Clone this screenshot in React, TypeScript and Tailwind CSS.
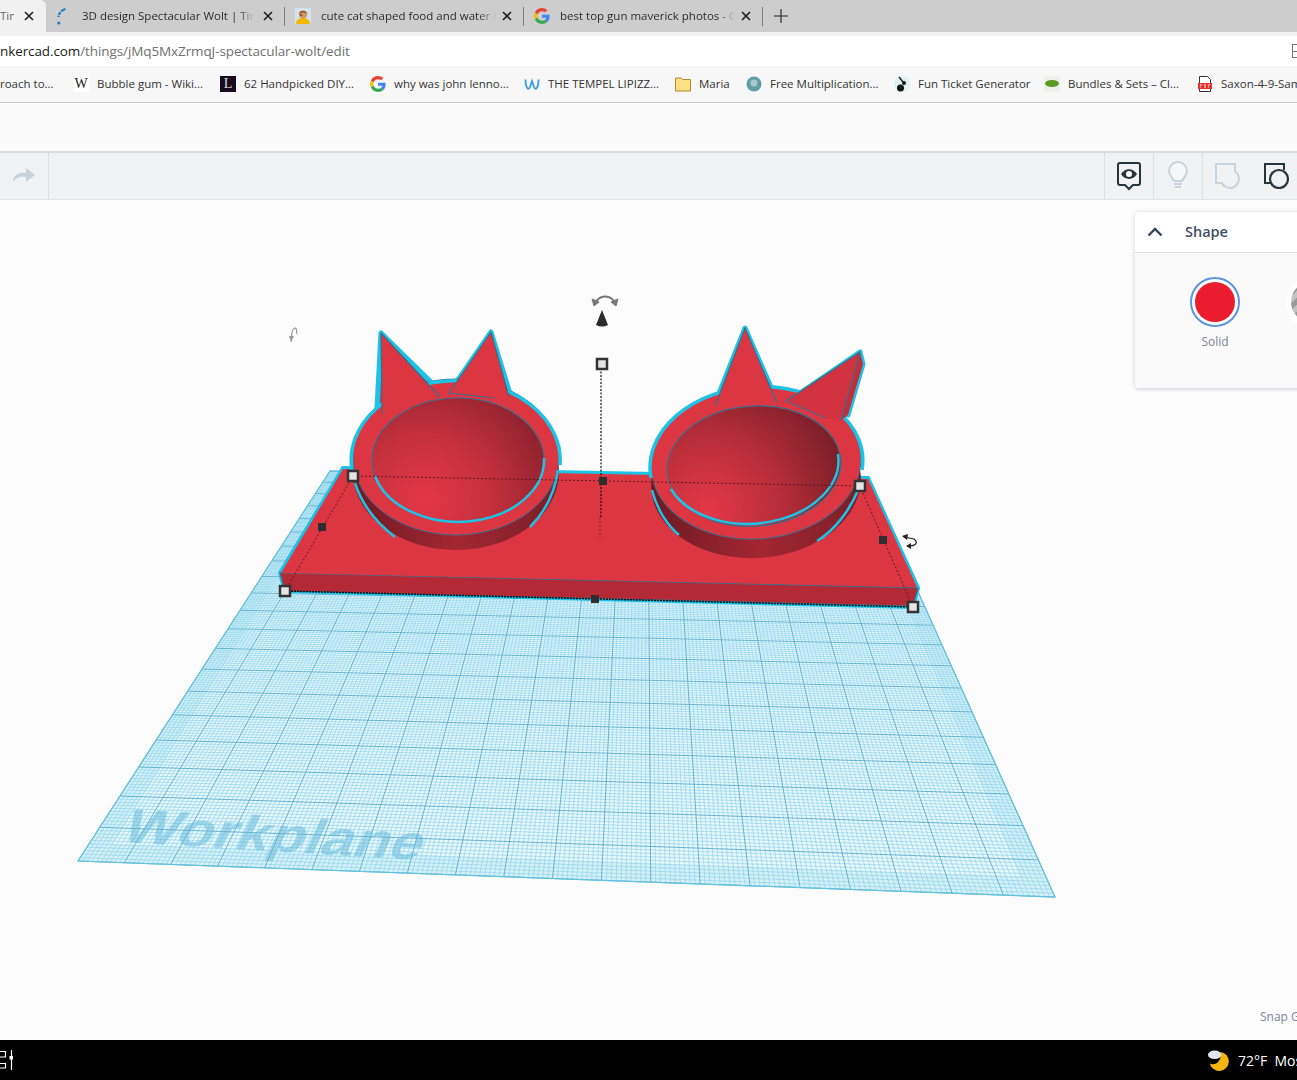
import React from 'react';

const CHROME_FONT = { fontFamily: '"Open Sans", "Noto Sans", sans-serif' };

const GoogleG = () => (
    <svg viewBox="0 0 48 48" className="w-4 h-4 shrink-0">
        <path fill="#EA4335" d="M24 9.5c3.5 0 6.700 1.200 9.200 3.600l6.900-6.900C35.900 2.400 30.500 0 24 0 14.600 0 6.500 5.400 2.600 13.200l8 6.200C12.500 13.600 17.800 9.500 24 9.500z" />
        <path fill="#4285F4" d="M46.900 24.500c0-1.600-.1-3.100-.4-4.500H24v9h12.900c-.6 3-2.200 5.500-4.700 7.200l7.700 6c4.500-4.200 7-10.300 7-17.700z" />
        <path fill="#FBBC05" d="M10.600 28.600c-.5-1.400-.8-3-.8-4.600s.3-3.200.8-4.600l-8-6.200C.9 16.500 0 20.100 0 24s.9 7.500 2.600 10.800l8-6.200z" />
        <path fill="#34A853" d="M24 48c6.500 0 11.900-2.100 15.900-5.800l-7.700-6c-2.200 1.400-4.900 2.300-8.200 2.300-6.200 0-11.500-4.200-13.400-9.900l-8 6.200C6.500 42.600 14.600 48 24 48z" />
    </svg>
);

const CloseX = () => (
    <svg viewBox="0 0 10 10" className="w-[10px] h-[10px] shrink-0">
        <path d="M1 1l8 8M9 1l-8 8" stroke="#222" strokeWidth="1.700" fill="none" />
    </svg>
);

const SwirlIcon = () => (
    <svg viewBox="0 0 16 16" className="w-4 h-4 shrink-0 overflow-visible">
        <path d="M9.500 1C6 2 2.800 5 2.500 9" stroke="#1f7fc4" strokeWidth="2.300" strokeDasharray="5 1 3 1" fill="none" />
        <circle cx="2.800" cy="15" r="1.600" fill="#1f7fc4" />
    </svg>
);

const CatFavicon = () => (
    <svg viewBox="0 0 16 16" className="w-4 h-4 shrink-0">
        <rect width="16" height="16" fill="#d4e4ea" />
        <path d="M1 16c0-4 3-6 7-6s7 2 7 6z" fill="#f2b705" />
        <circle cx="8" cy="6.500" r="4" fill="#d09a66" />
        <path d="M3.500 6C4.500 1.500 11.500 1.500 12.500 6 10 4.200 6 4.200 3.500 6z" fill="#9a5a36" />
        <circle cx="6" cy="7" r="1" fill="#7a3a2a" />
    </svg>
);

function Tab({ icon, title, textWidth }: { icon: React.ReactNode; title: string; textWidth: string }) {
    return (
        <div className="w-[239px] h-8 shrink-0 flex items-center pl-[10px] relative">
            <div className="w-4 h-4">{icon}</div>
            <div className={`ml-[10px] ${textWidth} overflow-hidden whitespace-nowrap text-[11.5px] text-[#2c2c2c] [mask-image:linear-gradient(to_right,black_90%,transparent)]`}>{title}</div>
            <div className="absolute left-[217px] top-[11px]"><CloseX /></div>
            <div className="absolute right-0 top-[7px] h-[19px] w-px bg-[#7d7d7d]"></div>
        </div>
    );
}

function Bookmark({ icon, label, textWidth }: { icon: React.ReactNode; label: string; textWidth: string }) {
    return (
        <div className="flex items-center shrink-0 mr-4">
            <div className="w-4 h-4 shrink-0">{icon}</div>
            <div className={`ml-2 ${textWidth} whitespace-nowrap text-[11.5px] text-[#333]`}>{label}</div>
        </div>
    );
}

const bookmarks = [
    { label: 'Bubble gum - Wiki...', w: 'w-[107px]', icon: <div className="w-4 h-4 bg-white font-['Liberation_Serif'] text-[14px] leading-4 text-center text-[#222]">W</div> },
    { label: '62 Handpicked DIY...', w: 'w-[110px]', icon: <div className="w-4 h-4 bg-[#1a0a1f] font-['Liberation_Serif'] text-[14px] leading-4 text-center text-[#ddd]">L</div> },
    { label: 'why was john lenno...', w: 'w-[114px]', icon: <GoogleG /> },
    {
        label: 'THE TEMPEL LIPIZZ...', w: 'w-[111px]', icon: (
            <svg viewBox="0 0 16 16" className="w-4 h-4"><path d="M1.500 3.500C1.500 12 4.500 15 6 11L8 5l2 6c1.500 4 4.500 1 4.500-7.500" stroke="#3b9be8" strokeWidth="1.800" fill="none" /></svg>
        )
    },
    {
        label: 'Maria', w: 'w-[31px]', icon: (
            <svg viewBox="0 0 16 16" className="w-4 h-4"><path d="M.5 2h5.500l1.500 1.500H15.500V15H.5z" fill="#fcdf82" stroke="#b38a2c" /></svg>
        )
    },
    {
        label: 'Free Multiplication...', w: 'w-[108px]', icon: (
            <svg viewBox="0 0 16 16" className="w-4 h-4"><circle cx="8" cy="8" r="7.500" fill="#5f9ea6" /><circle cx="8" cy="7" r="3.500" fill="#a9c9cc" /></svg>
        )
    },
    {
        label: 'Fun Ticket Generator', w: 'w-[110px]', icon: (
            <svg viewBox="0 0 16 16" className="w-4 h-4"><circle cx="8" cy="8" r="8" fill="#dff2f2" /><path d="M5 1l4 5" stroke="#222" strokeWidth="1.500" /><circle cx="10" cy="7" r="2" fill="#111" /><circle cx="6.500" cy="12" r="3.500" fill="#111" /></svg>
        )
    },
    {
        label: 'Bundles & Sets – Cl...', w: 'w-[113px]', icon: (
            <svg viewBox="0 0 16 16" className="w-4 h-4"><rect width="16" height="16" fill="#f0f0ea" /><ellipse cx="8" cy="7.500" rx="7" ry="3.500" fill="#5c9a22" /></svg>
        )
    },
    {
        label: 'Saxon-4-9-Sample', w: 'w-[90px]', icon: (
            <svg viewBox="0 0 16 16" className="w-4 h-4">
                <path d="M2.500.5h8l3 3V15.500h-11z" fill="#fff" stroke="#333" />
                <rect x="1" y="7" width="14" height="6" fill="#e8302e" />
                <path d="M3 9h2M7 9h2M11 9h2M3 11h1M7 11h2M11 11h1" stroke="#fff" strokeWidth="1" />
            </svg>
        )
    },
];

// maps grid coords (u,v in 0..1) onto the workplane quad
const P0 = [330, 471], P1 = [867, 478], P2 = [1055, 897], P3 = [78, 861];
const dx1 = P1[0] - P2[0], dx2 = P3[0] - P2[0], sx = P0[0] - P1[0] + P2[0] - P3[0];
const dy1 = P1[1] - P2[1], dy2 = P3[1] - P2[1], sy = P0[1] - P1[1] + P2[1] - P3[1];
const det = dx1 * dy2 - dx2 * dy1;
const g = (sx * dy2 - dx2 * sy) / det, h = (dx1 * sy - sx * dy1) / det;
const a = P1[0] - P0[0] + g * P1[0], b = P3[0] - P0[0] + h * P3[0];
const d = P1[1] - P0[1] + g * P1[1], e = P3[1] - P0[1] + h * P3[1];
function project(u: number, v: number) {
    const w = g * u + h * v + 1;
    return `${((a * u + b * v + P0[0]) / w).toFixed(1)} ${((d * u + e * v + P0[1]) / w).toFixed(1)}`;
}
function gridPath(step: number, skip?: number) {
    let out = '';
    for (let i = 0; i <= 200; i += step) {
        if (skip && i % skip === 0) continue;
        const t = i / 200;
        out += `M${project(t, 0)}L${project(t, 1)}M${project(0, t)}L${project(1, t)}`;
    }
    return out;
}
const quad = (m: number) => `M${project(m, m)}L${project(1 - m, m)}L${project(1 - m, 1 - m)}L${project(m, 1 - m)}Z`;

const CYAN = '#1cc3e6';
const EDGE = '#3f6c88';
const RED = '#dc3643';

function Handle({ x, y }: { x: number; y: number }) {
    return <rect x={x - 5} y={y - 5} width="10" height="10" fill="#e4e4e4" stroke="#333" strokeWidth="2.500" />;
}
function Dot({ x, y }: { x: number; y: number }) {
    return <rect x={x - 4} y={y - 4} width="8" height="8" fill="#2f2f2f" />;
}

function Scene() {
    return (
        <svg viewBox="0 200 1297 840" className="w-full h-full block">
            <defs>
                <radialGradient id="bowlA" gradientUnits="userSpaceOnUse" cx="425" cy="500" r="145">
                    <stop offset="0" stopColor="#e43747" />
                    <stop offset="0.45" stopColor="#c5303d" />
                    <stop offset="1" stopColor="#82202a" />
                </radialGradient>
                <radialGradient id="bowlB" gradientUnits="userSpaceOnUse" cx="705" cy="505" r="155">
                    <stop offset="0" stopColor="#e43747" />
                    <stop offset="0.45" stopColor="#b92e3a" />
                    <stop offset="1" stopColor="#701c25" />
                </radialGradient>
                <linearGradient id="wall" x1="0" x2="1" y1="0" y2="0">
                    <stop offset="0" stopColor="#6f1a23" />
                    <stop offset="0.5" stopColor="#a32731" />
                    <stop offset="1" stopColor="#7a1e27" />
                </linearGradient>
            </defs>

            {/* workplane */}
            <path d={quad(0)} fill="#e9f7fb" />
            <path d={quad(0) + quad(0.026)} fill="#7fd0e8" fillRule="evenodd" opacity="0.18" />
            <path d={gridPath(1, 10)} stroke="#8fd5ec" strokeWidth="0.7" fill="none" />
            <path d={gridPath(10)} stroke="#4fa9c9" strokeWidth="1" fill="none" opacity="0.85" />
            <path d={quad(0)} fill="none" stroke="#62c2dd" strokeWidth="1.200" />
            <text transform="translate(119,842) rotate(3.4) skewX(-22) scale(1.2,1)" fontFamily='"Liberation Sans", sans-serif' fontWeight="700" fontSize="49" fill="#62b9d9" opacity="0.5">Workplane</text>

            {/* base plate */}
            <path d="M343 468L868 478L918 588L913 607L285 591L280 573Z" fill={RED} stroke={CYAN} strokeWidth="4" />
            <path d="M280 573L918 588L913 606L285 591Z" fill="#b32a36" stroke={EDGE} strokeWidth="1" />
            <path d="M343 469L868 479L917 587L281 573Z" fill={RED} />

            {/* left bowl */}
            <path d="M381 333L377 408L432 383Z" fill={RED} stroke={CYAN} strokeWidth="5" strokeLinejoin="round" />
            <path d="M491 332L511 397L449 393Z" fill={RED} stroke={CYAN} strokeWidth="5" strokeLinejoin="round" />
            <ellipse cx="456" cy="472" rx="103" ry="78" fill="url(#wall)" />
            <ellipse cx="456" cy="457" rx="103" ry="78" fill={RED} stroke={EDGE} strokeWidth="1" />
            <path d="M352 470A104.500 79.500 0 1 1 560 465" fill="none" stroke={CYAN} strokeWidth="3.500" />
            <path d="M381 333L440 397L382 414Z" fill={RED} />
            <path d="M381 333L382 414M381 333L440 397" stroke={EDGE} strokeWidth="1.200" fill="none" />
            <path d="M491 332L509 397L494 398L449 393Z" fill={RED} />
            <path d="M491 332L509 397M491 332L449 393L494 398" stroke={EDGE} strokeWidth="1.200" fill="none" />
            <ellipse cx="458" cy="460" rx="86" ry="62" fill="url(#bowlA)" stroke={EDGE} strokeWidth="1.200" />
            <path d="M375 476A86 62 0 0 0 544 458" fill="none" stroke={CYAN} strokeWidth="2.500" />
            <path d="M355 483C362 505 378 524 395 537" fill="none" stroke={CYAN} strokeWidth="2.500" />
            <path d="M530 527C545 512 555 492 558 470" fill="none" stroke={CYAN} strokeWidth="2.500" />

            {/* right bowl */}
            <path d="M745 328L714 406L778 403Z" fill={RED} stroke={CYAN} strokeWidth="5" strokeLinejoin="round" />
            <path d="M860 352L863 364L848 415L790 400Z" fill={RED} stroke={CYAN} strokeWidth="5" strokeLinejoin="round" />
            <ellipse cx="756" cy="482" rx="105" ry="76" transform="rotate(-4 756 482)" fill="url(#wall)" />
            <ellipse cx="756" cy="463" rx="105" ry="76" transform="rotate(-4 756 463)" fill={RED} stroke={EDGE} strokeWidth="1" />
            <path d="M651 478A106.500 77.500 -4 1 1 862 470" fill="none" stroke={CYAN} strokeWidth="3.500" />
            <path d="M745 328L715 406L777 403Z" fill={RED} />
            <path d="M715 406L745 328L777 403" stroke={EDGE} strokeWidth="1.200" fill="none" />
            <path d="M860 352L786 401L825 418L841 420Z" fill="#d2323f" />
            <path d="M860 352L863 364L848 415L841 420Z" fill="#c22f3b" />
            <path d="M841 420L860 352L786 401L825 418" stroke={EDGE} strokeWidth="1.200" fill="none" />
            <ellipse cx="754" cy="466" rx="87" ry="60" transform="rotate(-4 754 466)" fill="url(#bowlB)" stroke={EDGE} strokeWidth="1.200" />
            <path d="M671 489A87 60 -4 0 0 838 454" fill="none" stroke={CYAN} strokeWidth="2.500" />
            <path d="M652 490C657 510 668 526 679 535" fill="none" stroke={CYAN} strokeWidth="2.500" />
            <path d="M817 541C835 530 850 510 858 490" fill="none" stroke={CYAN} strokeWidth="2.500" />

            {/* selection box */}
            <path d="M353 476L860 486M353 476L285 591M860 486L913 607" stroke="#5b1a20" strokeWidth="1" strokeDasharray="2 2" fill="none" />
            <path d="M285 591L913 607" stroke="#111" strokeWidth="1.500" strokeDasharray="2 1" fill="none" />
            <path d="M601 368L601 517" stroke="#111" strokeWidth="1.200" strokeDasharray="2 1.500" fill="none" />
            <path d="M600 517L600 538" stroke="#7a2028" strokeWidth="1" strokeDasharray="2 2" fill="none" />
            <Handle x={353} y={476} /><Handle x={860} y={486} /><Handle x={285} y={591} /><Handle x={913} y={607} /><Handle x={602} y={364} />
            <Dot x={322} y={527} /><Dot x={603} y={481} /><Dot x={883} y={540} /><Dot x={595} y={599} />

            {/* rotate handles */}
            <path d="M595 304C599 294 611 294 616 304" stroke="#777" strokeWidth="1.800" fill="none" />
            <path d="M592 299L594 306L599 302ZM618 299L616 306L611 302Z" fill="#777" stroke="#777" />
            <path d="M602 310L596 325Q602 328 608 325Z" fill="#2b2b2b" />
            <path d="M904 537L914 539C918 542 917 546 908 546" stroke="#222" strokeWidth="1.200" fill="none" />
            <path d="M902 536L908 534L907 540ZM911 543L911 549L906 546Z" fill="#222" />
            <path d="M291 342L292 332Q293 327 296 328L297 334" stroke="#888" strokeWidth="1" fill="none" />
            <path d="M289 336L294 336L291 342Z" fill="#999" />
        </svg>
    );
}

const App: React.FC = () => {
    return (
        <div className="w-[1297px] h-[1080px] overflow-hidden flex flex-col bg-[#fcfcfc]" style={CHROME_FONT}>
            {/* tab strip */}
            <div className="h-8 shrink-0 bg-[#cdcdcd] flex items-start relative">
                <div className="w-[46px] h-9 shrink-0 bg-[#f1f1f1] rounded-tr-[6px] flex items-center overflow-hidden relative z-10">
                    <div className="text-[11.5px] text-[#666] w-[14px] overflow-hidden whitespace-nowrap mb-1">Tinkercad</div>
                    <div className="ml-[10px] mb-1"><CloseX /></div>
                </div>
                <Tab icon={<SwirlIcon />} title="3D design Spectacular Wolt | Tinkercad" textWidth="w-[173px]" />
                <Tab icon={<CatFavicon />} title="cute cat shaped food and water bowl" textWidth="w-[175px]" />
                <Tab icon={<GoogleG />} title="best top gun maverick photos - Google" textWidth="w-[175px]" />
                <svg viewBox="0 0 14 14" className="w-[14px] h-[14px] ml-[11px] mt-[9px]"><path d="M7 0v14M0 7h14" stroke="#222" strokeWidth="1.100" /></svg>
            </div>
            <div className="h-1 shrink-0 bg-[#f1f1f1]"></div>

            {/* address bar */}
            <div className="h-[30px] shrink-0 bg-white flex items-center justify-between overflow-hidden">
                <div className="text-[13.5px] tracking-[-0.1px] whitespace-nowrap text-[#222]">nkercad.com<span className="text-[#707070]">/things/jMq5MxZrmqJ-spectacular-wolt/edit</span></div>
                <div className="w-[5px] h-[14px] border border-r-0 border-[#777] flex items-center"><div className="w-full h-px bg-[#777]"></div></div>
            </div>

            {/* bookmarks */}
            <div className="h-[37px] shrink-0 bg-[#f7f7f7] border-b border-[#c9c9c9] flex items-center overflow-hidden">
                <div className="w-[73px] shrink-0 text-[11.5px] text-[#333] whitespace-nowrap">roach to...</div>
                {bookmarks.map((b) => (
                    <Bookmark key={b.label} icon={b.icon} label={b.label} textWidth={b.w} />
                ))}
            </div>

            {/* tinkercad top bar */}
            <div className="h-12 shrink-0 bg-[#fbfbfb]"></div>

            {/* toolbar */}
            <div className="h-[49px] shrink-0 bg-[#f1f2f4] border-t-2 border-b border-t-[#dcdde1] border-b-[#e2e4e8] flex items-stretch justify-between">
                <div className="w-[49px] border-r border-[#dde0e5] flex items-center pl-[13px]">
                    <svg viewBox="0 0 22 14" className="w-[22px] h-[14px] mb-[2px]"><path d="M0 12C2 6 7 4 13 5V0l9 7-9 7V9C8 8 3 9 0 14z" fill="#c7d2dd" /></svg>
                </div>
                <div className="flex items-stretch">
                    <div className="w-[49px] border-l border-[#dde0e5] flex items-center justify-center">
                        <svg viewBox="0 0 26 30" className="w-[26px] h-[30px]">
                            <path d="M4 2h18a2 2 0 0 1 2 2v18a2 2 0 0 1-2 2h-5l-4 4-4-4H4a2 2 0 0 1-2-2V4a2 2 0 0 1 2-2z" fill="none" stroke="#26343c" strokeWidth="2" />
                            <path d="M5 13c4-6.500 12-6.500 16 0-4 6.500-12 6.500-16 0z" fill="#26343c" />
                            <circle cx="13" cy="13" r="3" fill="#fff" />
                        </svg>
                    </div>
                    <div className="w-[49px] border-l border-[#dde0e5] flex items-center justify-center">
                        <svg viewBox="0 0 22 30" className="w-[22px] h-[30px]">
                            <path d="M7 20C5 16 2 14 2 10a9 9 0 0 1 18 0c0 4-3 6-5 10z" fill="#f5f7f8" stroke="#c7d4dd" strokeWidth="2" />
                            <path d="M7 23h8M8 26h6" stroke="#c7d4dd" strokeWidth="2" />
                        </svg>
                    </div>
                    <div className="w-[95px] border-l border-[#dde0e5] flex items-center pl-[12px]">
                        <svg viewBox="0 0 26 26" className="w-[26px] h-[26px]">
                            <path d="M1 1H20V8.500A9 9 0 1 1 6.900 20H1Z" fill="none" stroke="#c7d4dd" strokeWidth="2" />
                        </svg>
                        <svg viewBox="0 0 26 26" className="w-[26px] h-[26px] ml-[23px]">
                            <path d="M7 20H1V1H20V7" fill="none" stroke="#26343c" strokeWidth="2" />
                            <circle cx="15" cy="16" r="9" fill="none" stroke="#26343c" strokeWidth="2.200" />
                        </svg>
                    </div>
                </div>
            </div>

            {/* canvas */}
            <div className="h-[840px] shrink-0 relative overflow-hidden bg-[#fcfcfc]">
                <Scene />
                <div className="absolute left-[1135px] top-3 w-[300px] h-[176px] bg-[#fafafb] rounded-[3px] shadow-[0_1px_4px_rgba(60,70,90,0.25)] overflow-hidden">
                    <div className="h-[41px] bg-white border-b border-[#dfe2e8] flex items-center">
                        <svg viewBox="0 0 16 10" className="w-4 h-[10px] ml-3"><path d="M1.500 8.500L8 2l6.500 6.500" stroke="#33435a" strokeWidth="2.400" fill="none" /></svg>
                        <div className="ml-[22px] text-[14.500px] font-semibold text-[#3f4e63]">Shape</div>
                    </div>
                    <div className="flex pt-[24px] pl-[55px] gap-[46px]">
                        <div className="w-[50px] flex flex-col items-center">
                            <div className="w-[50px] h-[50px] rounded-full border-2 border-[#5b93dc] bg-white flex items-center justify-center">
                                <div className="w-10 h-10 rounded-full bg-[#ec1c2f]"></div>
                            </div>
                            <div className="mt-[6px] text-[12px] text-[#7b8590]">Solid</div>
                        </div>
                        <div className="w-[50px] h-[50px] rounded-full border-[5px] border-white bg-[repeating-linear-gradient(135deg,#c4c4c4_0px,#c4c4c4_5px,#999_5px,#999_10px)]"></div>
                    </div>
                </div>
                <div className="absolute right-[-30px] bottom-[14px] w-[67px] text-[12px] text-[#7a8699] whitespace-nowrap">Snap Grid</div>
            </div>

            {/* taskbar */}
            <div className="h-10 shrink-0 bg-black flex items-center justify-between text-white overflow-hidden">
                <svg viewBox="0 0 13 20" className="w-[13px] h-5">
                    <path d="M0 1.500H5.500V7H0M0 13.500H5.500V18H0" fill="none" stroke="#fff" strokeWidth="1.200" />
                    <path d="M11.500 0V20" stroke="#fff" strokeWidth="1.200" />
                    <rect x="9.500" y="6" width="3.500" height="3.500" fill="#fff" />
                </svg>
                <div className="flex items-center w-[90px] shrink-0 overflow-hidden">
                    <svg viewBox="0 0 24 24" className="w-[23px] h-[23px] shrink-0">
                        <path d="M14 3a10 10 0 1 1-11 12c5 3 13-2 11-12z" fill="#f6b40e" />
                        <ellipse cx="8" cy="6" rx="7" ry="4.500" fill="#dfe6ee" />
                    </svg>
                    <div className="ml-2 text-[14px] whitespace-nowrap">72°F&nbsp;&nbsp;Mostly clear</div>
                </div>
            </div>
        </div>
    );
};

export default App;
